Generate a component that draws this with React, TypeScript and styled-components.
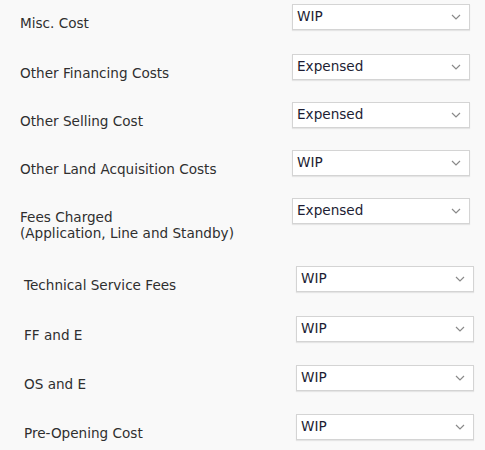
import styled, { createGlobalStyle } from 'styled-components';

const GlobalStyle = createGlobalStyle`
  html, body {
    margin: 0;
    padding: 0;
    background: #f9f9f9;
  }
  body {
    font-family: Tahoma, "DejaVu Sans", sans-serif;
  }
`;

interface CostRow {
  label: string[];
  value: string;
}

const firstRows: CostRow[] = [
  { label: ['Misc. Cost'], value: 'WIP' },
  { label: ['Other Financing Costs'], value: 'Expensed' },
  { label: ['Other Selling Cost'], value: 'Expensed' },
  { label: ['Other Land Acquisition Costs'], value: 'WIP' },
  { label: ['Fees Charged', '(Application, Line and Standby)'], value: 'Expensed' },
];

const secondRows: CostRow[] = [
  { label: ['Technical Service Fees'], value: 'WIP' },
  { label: ['FF and E'], value: 'WIP' },
  { label: ['OS and E'], value: 'WIP' },
  { label: ['Pre-Opening Cost'], value: 'WIP' },
];

const Chevron = () => (
  <svg width="10" height="6" viewBox="0 0 10 6" fill="none">
    <path d="M1 1l4 4 4-4" stroke="#8a8a8a" strokeWidth="1.2" />
  </svg>
);

const Select = ({ value }: { value: string }) => (
  <SelectBox>
    <SelectValue>{value}</SelectValue>
    <Chevron />
  </SelectBox>
);

const Group = ({ rows, shifted }: { rows: CostRow[]; shifted?: boolean }) => (
  <GroupList $shifted={shifted}>
    {rows.map((row) => (
      <Row key={row.label[0]}>
        <Label>
          {row.label.map((line) => (
            <span key={line}>{line}</span>
          ))}
        </Label>
        <Select value={row.value} />
      </Row>
    ))}
  </GroupList>
);

const App = () => (
  <>
    <GlobalStyle />
    <Page>
      <Group rows={firstRows} />
      <Group rows={secondRows} shifted />
    </Page>
  </>
);

const Page = styled.div`
  width: 485px;
  height: 450px;
  padding-top: 4px;
  box-sizing: border-box;
  display: flex;
  flex-direction: column;
  gap: 25px;
`;

const GroupList = styled.div<{ $shifted?: boolean }>`
  display: flex;
  flex-direction: column;
  gap: ${({ $shifted }) => ($shifted ? '22px' : '21px')};
  padding-left: ${({ $shifted }) => ($shifted ? '24px' : '20px')};

  & > *:first-child {
    margin-bottom: ${({ $shifted }) => ($shifted ? '1px' : '2px')};
  }
`;

const Row = styled.div`
  display: grid;
  grid-template-columns: 272px 178px;
  align-items: start;
`;

const Label = styled.div`
  display: flex;
  flex-direction: column;
  padding-top: 11px;
  font-size: 13.6px;
  line-height: 16px;
  color: #2f2f2f;
`;

const SelectBox = styled.div`
  height: 26px;
  box-sizing: border-box;
  display: flex;
  align-items: center;
  justify-content: space-between;
  padding: 0 8px 0 4px;
  background: #ffffff;
  border: 1px solid #d4d4d4;
  box-shadow: 0 1px 1px rgba(0, 0, 0, 0.08);
`;

const SelectValue = styled.span`
  font-size: 13.6px;
  color: #1d1d33;
  margin-top: -3px;
`;

export default App;
